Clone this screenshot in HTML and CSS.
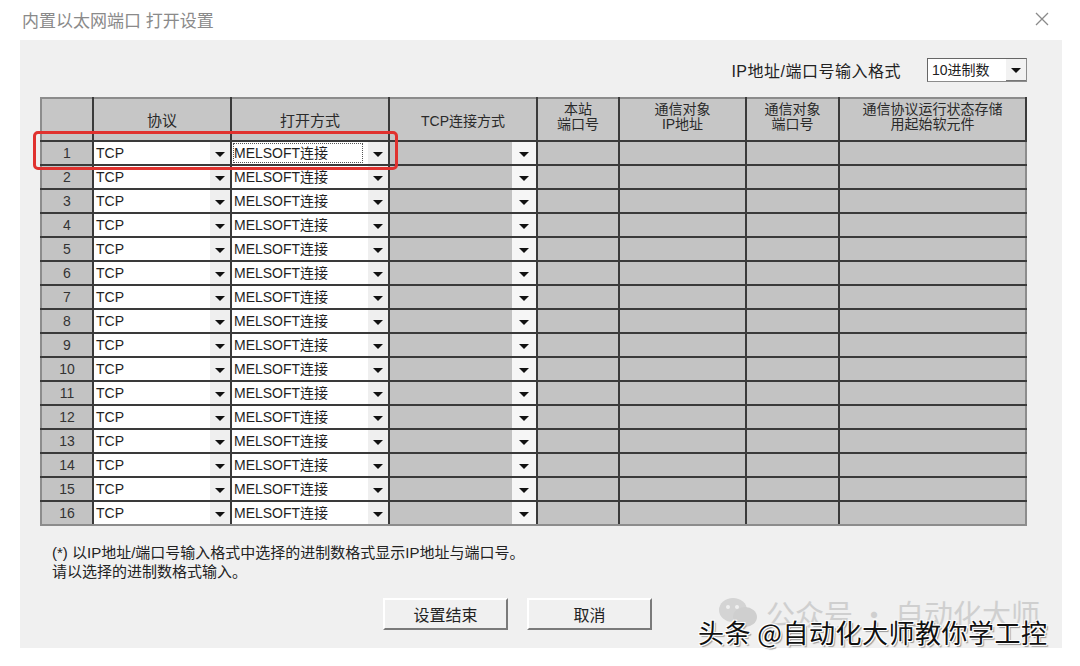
FILE: index.html
```html
<!DOCTYPE html>
<html>
    <head>
        <meta charset="utf-8">
        <link rel="stylesheet" href="styles.css">
    </head>

    <body>
        <div class="titlebar">
            <span class="title">内置以太网端口 打开设置</span>
            <span class="close">
                <svg width="16" height="16" viewBox="0 0 16 16"><path d="M2 2 L14 14 M14 2 L2 14" stroke="#8a8a8a" stroke-width="1.3"/></svg>
            </span>
        </div>

        <div class="panel">
            <div class="format">
                <span class="format-label">IP地址/端口号输入格式</span>
                <div class="format-select">
                    <span class="format-value">10进制数</span>
                    <span class="arrow-btn"><i class="tri"></i></span>
                </div>
            </div>

            <div class="grid-wrap">
                <table class="grid">
                    <colgroup>
                        <col style="width:52px">
                        <col style="width:138px">
                        <col style="width:158px">
                        <col style="width:148px">
                        <col style="width:82px">
                        <col style="width:127px">
                        <col style="width:93px">
                        <col style="width:187px">
                    </colgroup>
                    <thead>
                        <tr>
                            <th></th>
                            <th>协议</th>
                            <th>打开方式</th>
                            <th class="small">TCP连接方式</th>
                            <th class="two">本站<br>端口号</th>
                            <th class="two">通信对象<br>IP地址</th>
                            <th class="two">通信对象<br>端口号</th>
                            <th class="two">通信协议运行状态存储<br>用起始软元件</th>
                        </tr>
                    </thead>
                    <tbody id="rows"></tbody>
                </table>
                <div class="highlight"></div>
            </div>

            <div class="notes">
                (*) 以IP地址/端口号输入格式中选择的进制数格式显示IP地址与端口号。<br>
                请以选择的进制数格式输入。
            </div>

            <div class="buttons">
                <button class="btn">设置结束</button>
                <button class="btn">取消</button>
            </div>
        </div>

        <div class="mark-faint">
            <svg width="40" height="34" viewBox="0 0 40 34"><ellipse cx="15" cy="14" rx="14" ry="12" fill="#d4d4d4"/><ellipse cx="27" cy="21" rx="12" ry="10" fill="#cfcfcf"/><circle cx="10" cy="11" r="2" fill="#f0f0f0"/><circle cx="19" cy="11" r="2" fill="#f0f0f0"/></svg>
            <span>公众号 · 自动化大师</span>
        </div>
        <div class="mark">头条 @自动化大师教你学工控</div>

        <script>
            // Build the 16 connection rows
            var body = document.getElementById("rows");
            var html = "";
            for (var i = 1; i <= 16; i++) {
                html += "<tr>" +
                    "<td class='num'>" + i + "</td>" +
                    "<td class='white'><div class='drop'><span class='val'>TCP</span><span class='arrow-btn'><i class='tri'></i></span></div></td>" +
                    "<td class='white'><div class='drop'><span class='val" + (i == 1 ? " focus" : "") + "'>MELSOFT连接</span><span class='arrow-btn'><i class='tri'></i></span></div></td>" +
                    "<td><div class='drop'><span class='val'></span><span class='arrow-btn light'><i class='tri'></i></span></div></td>" +
                    "<td></td><td></td><td></td><td></td>" +
                    "</tr>";
            }
            body.innerHTML = html;
        </script>
    </body>
</html>
```

FILE: styles.css
```css
html {
    font-family: "Liberation Sans", "Noto Sans CJK SC", sans-serif;
}

body {
    margin: 0;
    background: #ffffff;
    width: 1080px;
    height: 666px;
    position: relative;
    overflow: hidden;
}

.titlebar {
    height: 40px;
    display: flex;
    align-items: center;
    justify-content: space-between;
    padding: 0 30px 0 22px;
}

.title {
    font-size: 17px;
    color: #8a8a8a;
    margin-top: -2px;
}

.close {
    display: flex;
    margin-top: -2px;
}

.panel {
    margin-left: 20px;
    width: 1042px;
    height: 608px;
    background: #f0f0f0;
    box-sizing: border-box;
    padding: 18px 0 0 20px;
}

.format {
    display: flex;
    justify-content: flex-end;
    align-items: center;
    padding-right: 35px;
    height: 24px;
}

.format-label {
    font-size: 16px;
    letter-spacing: 0.5px;
    color: #222;
    margin-right: 26px;
}

.format-select {
    display: flex;
    width: 100px;
    height: 24px;
    box-sizing: border-box;
    border: 1px solid #8c8c8c;
    border-left-color: #666;
    border-top-color: #666;
    background: #fff;
}

.format-value {
    flex: 1;
    font-size: 14px;
    line-height: 22px;
    padding-left: 4px;
    color: #222;
}

.format-select .arrow-btn {
    width: 20px;
    background: #f2f2f2;
    border-bottom: 1px solid #777;
}

.grid-wrap {
    position: relative;
    margin-top: 15px;
    width: 985px;
}

.grid {
    border-collapse: collapse;
    table-layout: fixed;
    width: 985px;
    background: #c3c3c3;
    border: 1px solid #8c8c8c;
}

.grid th {
    height: 38px;
    border: 2px solid #3a3a3a;
    border-top-color: #8c8c8c;
    font-weight: normal;
    font-size: 15px;
    color: #2a2a2a;
    padding: 0;
    background: #c6c6c6;
}

.grid th:first-child {
    border-left-color: #8c8c8c;
}

.grid th.small {
    font-size: 14px;
}

.grid th.two {
    line-height: 15px;
    font-size: 14px;
    vertical-align: top;
    padding-top: 3px;
}

.grid td {
    height: 22px;
    border: 2px solid #3a3a3a;
    padding: 0;
    font-size: 14px;
    color: #1e1e1e;
}

.grid td:first-child {
    border-left-color: #8c8c8c;
}

.grid td:last-child {
    border-right-color: #8c8c8c;
}

.grid tr:last-child td {
    border-bottom-color: #8c8c8c;
}

.grid td.num {
    text-align: center;
    color: #333;
    background: #c3c3c3;
}

.grid td.white {
    background: #ffffff;
}

.drop {
    display: flex;
    height: 22px;
    align-items: stretch;
}

.val {
    flex: 1;
    line-height: 22px;
    padding-left: 2px;
    white-space: nowrap;
    overflow: hidden;
}

.val.focus {
    outline: 1px dotted #555;
    outline-offset: -2px;
    margin-right: 4px;
}

.arrow-btn {
    width: 20px;
    display: flex;
    align-items: center;
    justify-content: center;
    background: #efefef;
}

.arrow-btn.light {
    background: #f6f6f6;
    width: 24px;
}

.tri {
    display: block;
    width: 0;
    height: 0;
    border-left: 5px solid transparent;
    border-right: 5px solid transparent;
    border-top: 5px solid #111;
    margin-top: 2px;
}

.highlight {
    position: absolute;
    left: -7px;
    top: 34px;
    width: 365px;
    height: 39px;
    box-sizing: border-box;
    border: 3px solid #e0322f;
    border-radius: 5px;
}

.notes {
    margin-top: 17px;
    padding-left: 12px;
    font-size: 15px;
    line-height: 19px;
    color: #222;
}

.buttons {
    display: flex;
    gap: 19px;
    margin-top: 17px;
    padding-left: 343px;
}

.btn {
    width: 125px;
    height: 32px;
    font-family: "Liberation Sans", "Noto Sans CJK SC", sans-serif;
    font-size: 16px;
    color: #222;
    background: #f0f0f0;
    border: 2px solid;
    border-color: #ffffff #7a7a7a #7a7a7a #ffffff;
    padding: 0;
}

.mark-faint {
    position: absolute;
    left: 718px;
    top: 592px;
    display: flex;
    align-items: center;
    gap: 8px;
    color: #cfcfcf;
    font-family: "Noto Sans CJK SC", sans-serif;
    font-size: 29px;
    white-space: nowrap;
}

.mark {
    position: absolute;
    left: 698px;
    top: 613px;
    font-family: "Noto Sans CJK SC", sans-serif;
    font-size: 26px;
    letter-spacing: 0.5px;
    color: #111;
    white-space: nowrap;
    text-shadow: 1px 1px 0 #fff, -1px -1px 0 #fff, 1px -1px 0 #fff, -1px 1px 0 #fff, 2px 2px 1px #999;
}
```
